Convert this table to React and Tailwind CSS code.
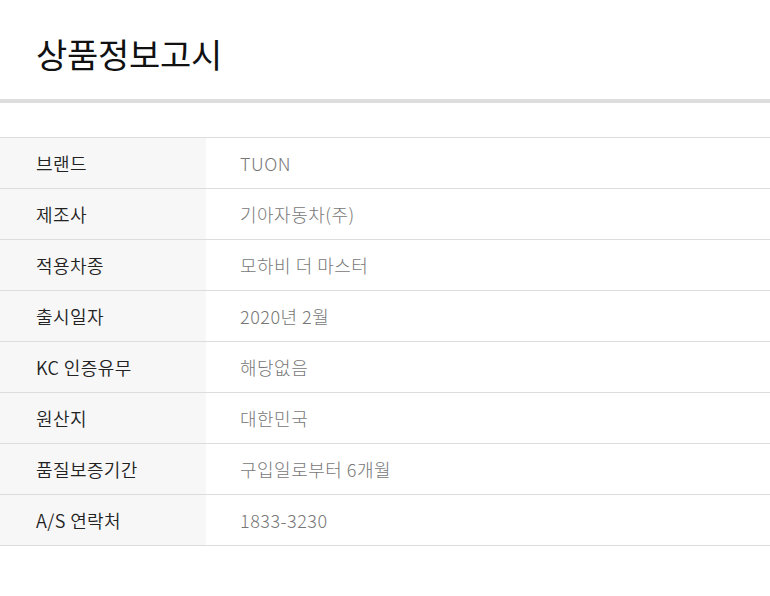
export default function App() {
  const rows = [
    ['브랜드', 'TUON'],
    ['제조사', '기아자동차(주)'],
    ['적용차종', '모하비 더 마스터'],
    ['출시일자', '2020년 2월'],
    ['KC 인증유무', '해당없음'],
    ['원산지', '대한민국'],
    ['품질보증기간', '구입일로부터 6개월'],
    ['A/S 연락처', '1833-3230'],
  ]

  return (
    <div className="w-[770px] h-[596px] bg-white" style={{ fontFamily: '"Noto Sans CJK KR", "Noto Sans", sans-serif' }}>
      <div className="h-[99px] flex items-center pl-[36px] pt-[9px]">
        <h1 className="text-[34px] leading-none tracking-[-0.3px] text-[#111]">상품정보고시</h1>
      </div>
      <div className="h-[4px] bg-[#dddddd]" />
      <div className="mt-[34px] border-t border-[#dddddd]">
        {rows.map(([label, value]) => (
          <div key={label} className="flex h-[51px] border-b border-[#dddddd]">
            <div className="w-[206px] bg-[#f7f7f7] flex items-center pl-[36px] text-[18px] font-[350] tracking-[0.4px] text-[#222]">
              {label}
            </div>
            <div className="flex-1 flex items-center pl-[34px] text-[18px] font-light tracking-[0.5px] text-[#777]">
              {value}
            </div>
          </div>
        ))}
      </div>
    </div>
  )
}
